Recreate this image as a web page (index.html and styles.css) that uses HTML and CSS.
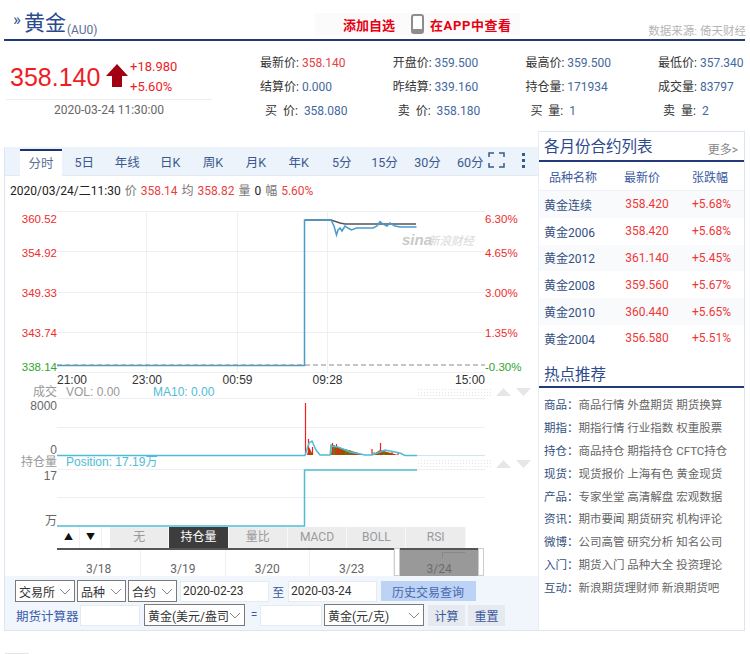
FILE: index.html
```html
<!DOCTYPE html>
<html lang="zh-CN">
<head>
    <meta charset="UTF-8">
    <meta name="viewport" content="width=device-width, initial-scale=1.0">
    <title>黄金(AU0)行情</title>
    <link rel="stylesheet" href="styles.css">
</head>
<body>
<div class="page">
    <header class="head">
        <div class="head-title"><span class="head-mark">»</span><h1>黄金</h1><sub>(AU0)</sub></div>
        <div class="head-actions">
            <a class="act add">添加自选</a>
            <svg class="phone" width="13" height="20" viewBox="0 0 13 20"><rect x="1" y="1" width="11" height="18" rx="2" fill="#fff" stroke="#8d8d8d" stroke-width="2"/><rect x="1" y="15" width="11" height="4" rx="1" fill="#8d8d8d"/></svg>
            <a class="act app">在APP中查看</a>
        </div>
        <div class="head-source">数据来源: 倚天财经</div>
    </header>

    <section class="quote">
        <div class="quote-main">
            <div class="quote-now">
                <span class="price">358.140</span>
                <svg class="up" width="22" height="23" viewBox="0 0 22 23"><path d="M11 0 22 12H16V23H6V12H0Z" fill="#a00012"/></svg>
                <div class="change"><span>+18.980</span><span>+5.60%</span></div>
            </div>
            <div class="quote-time">2020-03-24 11:30:00</div>
        </div>
        <div class="quote-grid">
            <div>最新价: <b class="red">358.140</b></div>
            <div>开盘价: <b>359.500</b></div>
            <div>最高价: <b>359.500</b></div>
            <div>最低价: <b>357.340</b></div>
            <div>结算价: <b>0.000</b></div>
            <div>昨结算: <b>339.160</b></div>
            <div>持仓量: <b>171934</b></div>
            <div>成交量: <b>83797</b></div>
            <div class="wide">买 价: <b>358.080</b></div>
            <div class="wide">卖 价: <b>358.180</b></div>
            <div class="wide">买 量: <b>1</b></div>
            <div class="wide">卖 量: <b>2</b></div>
        </div>
    </section>

    <main class="main">
        <section class="chart-panel">
            <nav class="tabs">
                <a class="tab on">分时</a>
                <a class="tab">5日</a>
                <a class="tab">年线</a>
                <a class="tab">日K</a>
                <a class="tab">周K</a>
                <a class="tab">月K</a>
                <a class="tab">年K</a>
                <a class="tab">5分</a>
                <a class="tab">15分</a>
                <a class="tab">30分</a>
                <a class="tab">60分</a>
                <svg class="full" width="17" height="16" viewBox="0 0 17 16"><path d="M1 5V1H6M11 1H16V5M16 11V15H11M6 15H1V11" fill="none" stroke="#3a5a8f" stroke-width="1.500"/></svg>
                <div class="dots"><i></i><i></i><i></i></div>
            </nav>
            <div class="info">2020/03/24/二11:30 <em>价</em> <span class="red">358.14</span> <em>均</em> <span class="red">358.82</span> <em>量</em> 0 <em>幅</em> <span class="red">5.60%</span></div>

            <svg class="chart" width="533" height="325" viewBox="5 202 533 325">
                <!-- 网格 -->
                <path class="grid" d="M57 211.5H485M57 251.5H485M57 292.5H485M57 332.5H485M57 372.5H485M146.5 211V372M237.5 211V372M327.5 211V372M57 398.5H485M57 427.5H485M57 469.5H485M57 497.5H485"/>

                <!-- 价格 -->
                <text class="num red-t" x="57" y="223" text-anchor="end">360.52</text>
                <text class="num red-t" x="57" y="257" text-anchor="end">354.92</text>
                <text class="num red-t" x="57" y="297" text-anchor="end">349.33</text>
                <text class="num red-t" x="57" y="337" text-anchor="end">343.74</text>
                <text class="num green-t" x="57" y="371" text-anchor="end">338.14</text>
                <text class="num red-t" x="485" y="223">6.30%</text>
                <text class="num red-t" x="485" y="257">4.65%</text>
                <text class="num red-t" x="485" y="297">3.00%</text>
                <text class="num red-t" x="485" y="337">1.35%</text>
                <text class="num green-t" x="485" y="371">-0.30%</text>

                <text class="mark" x="402" y="245">sina</text>
                <text class="mark-cn" x="428" y="245">新浪财经</text>
                <path class="avg" d="M305 220H331L340 223L345 224H416"/>
                <path class="line" d="M57 365.5H304.5V220H331L334 226L336.500 235L338 230L340 228L342 231L345 226L348 228L351.500 230L356.500 228H373L377 226L380 221.500L383 224L385 225L387 226L390 223L395 226L400 227H416.500"/>
                <path class="base" d="M57 365H485"/>

                <text class="time" x="57" y="384">21:00</text>
                <text class="time" x="147" y="384" text-anchor="middle">23:00</text>
                <text class="time" x="237.500" y="384" text-anchor="middle">00:59</text>
                <text class="time" x="327.500" y="384" text-anchor="middle">09:28</text>
                <text class="time" x="485" y="384" text-anchor="end">15:00</text>

                <!-- 成交 -->
                <text class="sub" x="57" y="396" text-anchor="end">成交</text>
                <text class="sub" x="66" y="396">VOL: 0.00</text>
                <text class="sub cyan-t" x="153" y="396">MA10: 0.00</text>
                <path class="dotted" d="M418 389.500H492M418 392.500H492M418 395.500H492"/>
                <path class="arrow-t" d="M503.500 388L511 396H496ZM516 388H531L523.500 396Z"/>
                <text class="axis" x="57" y="410" text-anchor="end">8000</text>
                <text class="axis" x="57" y="454" text-anchor="end">0</text>

                <polygon points="331,455 333,445 338,447 362,454 364,455" fill="#a84a00"/>
                <polygon points="307,455 309,447 313,455" fill="#a84a00"/>
                <polygon points="372,455 380,450 398,455" fill="#a84a00"/>
                <path class="bars-g" d="M331 455V444M334 455V445M346 455V449M350 455V450M374 455V452M380 455V451M384 455V450"/>
                <path class="bars-r" d="M305.500 455V403M308.500 455V439M312.500 455V447M332.500 455V443M336.500 455V444M372 455V449M380.500 455V443M392 455V451M398 455V452"/>
                <path class="ma" d="M57 455.500H305L309 443L312 441L316 450L320 455H330L331 446L338 447L350 452L365 455H372L385 450L400 453L405 455.500H417"/>
                <path class="ma-thin" d="M417 455.500H485"/>

                <!-- 持仓量 -->
                <text class="sub" x="57" y="466" text-anchor="end">持仓量</text>
                <text class="sub cyan-t" x="66" y="466">Position: 17.19万</text>
                <path class="dotted" d="M418 460.500H492M418 463.500H492M418 466.500H492"/>
                <path class="arrow-t" d="M503.500 460L511 468H496ZM516 460H531L523.500 468Z"/>
                <text class="axis" x="57" y="480" text-anchor="end">17</text>
                <text class="axis" x="57" y="525" text-anchor="end">万</text>
                <path class="ma" d="M57 526H304.500V470H417"/>
            </svg>

            <div class="ind-bar">
                <a class="ind-arrow">▲</a>
                <a class="ind-arrow">▼</a>
                <a class="ind first">无</a>
                <a class="ind on">持仓量</a>
                <a class="ind">量比</a>
                <a class="ind">MACD</a>
                <a class="ind">BOLL</a>
                <a class="ind">RSI</a>
            </div>

            <div class="range">
                <div class="range-day">3/18</div>
                <div class="range-day">3/19</div>
                <div class="range-day">3/20</div>
                <div class="range-day">3/23</div>
                <div class="range-day last">3/24</div>
                <div class="range-mask"><i></i></div>
                <div class="range-handle left"></div>
                <div class="range-handle right"></div>
            </div>

            <div class="forms">
                <div class="form-row">
                    <div class="sel w60">交易所<svg width="12" height="7" viewBox="0 0 12 7"><path d="M1 1 6 6 11 1"/></svg></div>
                    <div class="sel w49">品种<svg width="12" height="7" viewBox="0 0 12 7"><path d="M1 1 6 6 11 1"/></svg></div>
                    <div class="sel w49 m3">合约<svg width="12" height="7" viewBox="0 0 12 7"><path d="M1 1 6 6 11 1"/></svg></div>
                    <input class="txt date" type="text" value="2020-02-23">
                    <span class="to">至</span>
                    <input class="txt date" type="text" value="2020-03-24">
                    <button class="btn-query">历史交易查询</button>
                </div>
                <div class="form-row row2">
                    <a class="calc">期货计算器</a>
                    <input class="txt w60" type="text">
                    <div class="sel w101 m3">黄金(美元/盎司<svg width="12" height="7" viewBox="0 0 12 7"><path d="M1 1 6 6 11 1"/></svg></div>
                    <span class="eq">=</span>
                    <input class="txt w62" type="text">
                    <div class="sel w100 m3">黄金(元/克)<svg width="12" height="7" viewBox="0 0 12 7"><path d="M1 1 6 6 11 1"/></svg></div>
                    <button class="btn-small first">计算</button>
                    <button class="btn-small">重置</button>
                </div>
            </div>
        </section>

        <aside class="side">
            <div class="side-title"><h2>各月份合约列表</h2><a class="more">更多&gt;</a></div>
            <div class="list-head"><span>品种名称</span><span>最新价</span><span>张跌幅</span></div>
            <div class="list-row"><span>黄金连续</span><b>358.420</b><b>+5.68%</b></div>
            <div class="list-row"><span>黄金2006</span><b>358.420</b><b>+5.68%</b></div>
            <div class="list-row"><span>黄金2012</span><b>361.140</b><b>+5.45%</b></div>
            <div class="list-row"><span>黄金2008</span><b>359.560</b><b>+5.67%</b></div>
            <div class="list-row"><span>黄金2010</span><b>360.440</b><b>+5.65%</b></div>
            <div class="list-row"><span>黄金2004</span><b>356.580</b><b>+5.51%</b></div>

            <div class="side-title hot"><h2>热点推荐</h2></div>
            <ul class="hot-list">
                <li><span>商品：</span>商品行情 外盘期货 期货换算</li>
                <li><span>期指：</span>期指行情 行业指数 权重股票</li>
                <li><span>持仓：</span>商品持仓 期指持仓 CFTC持仓</li>
                <li><span>现货：</span>现货报价 上海有色 黄金现货</li>
                <li><span>产品：</span>专家坐堂 高清解盘 宏观数据</li>
                <li><span>资讯：</span>期市要闻 期货研究 机构评论</li>
                <li><span>微博：</span>公司高管 研究分析 知名公司</li>
                <li><span>入门：</span>期货入门 品种大全 投资理论</li>
                <li><span>互动：</span>新浪期货理财师 新浪期货吧</li>
            </ul>
        </aside>
    </main>
    <div class="foot-mark"></div>
</div>
</body>
</html>
```

FILE: styles.css
```css
body {
    margin: 0;
    background-color: #fff;
    font-family: Roboto, "Noto Sans CJK SC", sans-serif;
    font-size: 12px;
    color: #333;
}

.page {
    width: 741px;
    margin-left: 4px;
}

/* 顶部 */
.head {
    display: flex;
    align-items: flex-end;
    height: 39px;
    border-bottom: 2px solid #223a7c;
    position: relative;
}

.head-title {
    display: flex;
    align-items: flex-end;
    width: 311px;
    padding-left: 9px;
    box-sizing: border-box;
    color: #2d4a8e;
}

.head-mark {
    font-size: 17px;
    line-height: 40px;
    margin-right: 3px;
}

h1 {
    margin: 0;
    font-size: 21px;
    font-weight: normal;
    line-height: 36px;
    font-family: "Noto Sans CJK SC", sans-serif;
}

sub {
    margin-left: 1px;
    font-size: 12px;
    line-height: 18px;
    color: #5a6f95;
    vertical-align: baseline;
}

.head-actions {
    display: flex;
    align-items: center;
    width: 205px;
    height: 22px;
    margin-bottom: 4px;
    padding-left: 28px;
    box-sizing: border-box;
    background-color: #fbfbfb;
}

.act {
    color: #e60012;
    font-size: 13px;
    font-weight: bold;
    white-space: nowrap;
}

.act.app {
    letter-spacing: 0.600px;
}

.phone {
    margin: 0 6px 0 16px;
}

.head-source {
    margin-left: auto;
    margin-right: -1px;
    padding-bottom: 1px;
    font-size: 11.500px;
    color: #b5b5b5;
    white-space: nowrap;
}

/* 报价 */
.quote {
    display: flex;
    height: 90px;
}

.quote-main {
    flex-shrink: 0;
    width: 206px;
    margin-left: 2px;
    margin-right: 48px;
}

.quote-now {
    display: flex;
    align-items: center;
    height: 58px;
    padding-left: 4px;
    border-bottom: 1px solid #eee;
}

.price {
    font-family: "Liberation Sans", sans-serif;
    font-size: 25px;
    color: #f01c24;
    margin-top: 14px;
    width: 96px;
}

.up {
    margin-top: 10px;
}

.change {
    display: flex;
    flex-direction: column;
    margin-left: 2px;
    margin-top: 14px;
    color: #f01c24;
    font-size: 13px;
    line-height: 20px;
}

.quote-time {
    text-align: center;
    line-height: 20px;
    color: #666;
    font-size: 12px;
}

.quote-grid {
    flex-shrink: 0;
    display: grid;
    grid-template-columns: 132.700px 132.700px 132.700px 90px;
    grid-auto-rows: 24px;
    padding-top: 10px;
    line-height: 24px;
    font-size: 12px;
    white-space: nowrap;
}

.quote-grid b {
    font-weight: normal;
    color: #44699e;
}

.quote-grid b.red {
    color: #e8413f;
}

.wide {
    padding-left: 5px;
    word-spacing: 3px;
}

.wide b {
    word-spacing: 0;
}

.red {
    color: #e8413f;
}

/* 主体 */
.main {
    display: flex;
    align-items: flex-end;
    height: 500px;
}

.chart-panel {
    width: 534px;
    height: 484px;
    box-sizing: border-box;
    border-left: 1px solid #dce6f2;
    border-bottom: 1px solid #dce6f2;
}

.tabs {
    display: flex;
    align-items: flex-end;
    height: 29px;
    padding-left: 15px;
    background-color: #edf3fb;
    border-bottom: 1px solid #e3eaf4;
    box-sizing: border-box;
}

.tab {
    width: 42.900px;
    height: 25px;
    line-height: 26px;
    text-align: center;
    color: #3a5a8f;
    font-size: 12.500px;
    flex-shrink: 0;
}

.tab.on {
    width: 42px;
    margin-right: 0.900px;
    height: 27px;
    margin-bottom: -1px;
    background-color: #fff;
    border-top: 2px solid #1c3378;
    box-sizing: border-box;
    line-height: 25px;
    color: #5a6f95;
}

.full {
    align-self: flex-start;
    margin: 5px 0 0 -4px;
    flex-shrink: 0;
}

.dots {
    align-self: flex-start;
    display: flex;
    flex-direction: column;
    gap: 3px;
    margin: 6px 0 0 17px;
}

.dots i {
    width: 3px;
    height: 3px;
    background-color: #3a5a8f;
}

.info {
    height: 26px;
    padding: 7px 0 0 5px;
    box-sizing: border-box;
    line-height: 16px;
    font-size: 12px;
    word-spacing: 1px;
    color: #222;
    white-space: nowrap;
}

.info em {
    font-style: normal;
    color: #777;
}

.chart {
    display: block;
}

.chart text {
    font-family: "Liberation Sans", "Noto Sans CJK SC", sans-serif;
}

.grid {
    fill: none;
    stroke: #eeeff2;
    stroke-width: 1;
}

.num {
    font-size: 11.500px;
}

.red-t {
    fill: #ee2c2c;
}

.green-t {
    fill: #2ea52e;
}

.base {
    fill: none;
    stroke: #8a8a8a;
    stroke-dasharray: 5 3;
}

.line {
    fill: none;
    stroke: #4a9bce;
    stroke-width: 1.500;
}

.avg {
    fill: none;
    stroke: #555;
    stroke-width: 1.500;
}

.time {
    font-size: 12px;
    fill: #333;
}

.sub {
    font-size: 12px;
    fill: #999;
}

.sub.cyan-t {
    fill: #4fbcd6;
}

.axis {
    font-size: 12px;
    fill: #666;
}

.dotted {
    fill: none;
    stroke: #e4e4e4;
    stroke-dasharray: 1 2;
}

.arrow-t {
    fill: #e6e6e6;
}

.bars-g {
    fill: none;
    stroke: #22a83a;
}

.bars-r {
    fill: none;
    stroke: #f02020;
    stroke-width: 1.200;
}

.ma {
    fill: none;
    stroke: #4fbcd6;
    stroke-width: 1.500;
}

.ma-thin {
    fill: none;
    stroke: #cfe6ee;
}

.mark {
    font-size: 15px;
    font-weight: bold;
    font-style: italic;
    fill: #c9c9c9;
}

.mark-cn {
    font-size: 11.500px;
    font-style: italic;
    fill: #d8d8d8;
}

/* 指标 */
.ind-bar {
    display: flex;
    height: 21px;
    margin-left: 53px;
}

.ind-arrow {
    width: 22px;
    line-height: 21px;
    text-align: center;
    font-size: 9px;
    color: #111;
    border-right: 1px solid #f0f0f0;
    box-sizing: border-box;
}

.ind {
    width: 59.300px;
    line-height: 21px;
    text-align: center;
    background-color: #ececec;
    border-right: 1px solid #f8f8f8;
    box-sizing: border-box;
    color: #9a9a9a;
}

.ind.first {
    margin-left: 8px;
}

.ind.on {
    background-color: #3d3d3d;
    color: #fff;
}

.range {
    display: flex;
    position: relative;
    height: 28px;
    margin-left: 52px;
    width: 427px;
    border-top: 2px solid #555;
    box-sizing: border-box;
}

.range-day {
    width: 84.300px;
    box-sizing: border-box;
    border-right: 1px solid #f0f0f0;
    padding-top: 11px;
    line-height: 16px;
    text-align: center;
    color: #666;
}

.range-day.last {
    flex: 1;
    border-right: none;
}

.range-mask {
    position: absolute;
    left: 343px;
    top: 0;
    width: 78px;
    height: 26px;
    background-color: rgba(110, 110, 110, 0.7);
}

.range-mask i {
    position: absolute;
    left: 42px;
    top: 2px;
    width: 22px;
    height: 5px;
    border-top: 1px solid #888;
    border-left: 1px solid #888;
}

.range-handle {
    position: absolute;
    top: -2px;
    width: 6px;
    height: 28px;
    background-color: #fff;
    border: 1px solid #ccc;
    box-sizing: border-box;
}

.range-handle.left {
    left: 337px;
}

.range-handle.right {
    left: 421px;
}

/* 表单 */
.forms {
    height: 54px;
    padding: 4px 0 0 10px;
    box-sizing: border-box;
    background-color: #f1f5fc;
}

.form-row {
    display: flex;
    align-items: center;
    height: 22px;
}

.row2 {
    margin-top: 2px;
}

.sel {
    display: flex;
    align-items: center;
    justify-content: space-between;
    height: 22px;
    padding: 0 3px;
    margin-right: 2px;
    box-sizing: border-box;
    border: 1px solid #7a7a7a;
    background-color: #fff;
    font-size: 12px;
    color: #333;
    white-space: nowrap;
    overflow: hidden;
}

.sel.m3 {
    margin-right: 3px;
}

.sel svg {
    flex-shrink: 0;
    fill: none;
    stroke: #888;
}

.w60 {
    width: 60px;
}

.w49 {
    width: 49px;
}

.w62 {
    width: 62px;
}

.w100 {
    width: 100px;
}

.w101 {
    width: 101px;
}

.txt {
    height: 21px;
    padding: 0 2px;
    box-sizing: border-box;
    border: 1px solid #e6ebf3;
    background-color: #fff;
    font-family: inherit;
    font-size: 12px;
    color: #333;
}

.date {
    width: 88.500px;
}

.to {
    width: 19.500px;
    text-align: center;
    color: #3a5a9f;
}

.btn-query {
    width: 95px;
    height: 20px;
    margin-left: 4px;
    padding: 0;
    border: none;
    background-color: #bcd3f5;
    font-family: inherit;
    font-size: 12px;
    color: #4a68ad;
}

.calc {
    width: 64px;
    margin-left: 1px;
    font-size: 12.500px;
    color: #3a5bab;
    white-space: nowrap;
}

.row2 .w60 {
    margin-right: 4px;
}

.eq {
    width: 12px;
    text-align: center;
    color: #3a5a9f;
}

.row2 .w62 {
    margin-right: 2px;
}

.btn-small {
    width: 37px;
    height: 21px;
    margin-right: 3px;
    padding: 0;
    border: none;
    background-color: #e6e9ed;
    font-family: inherit;
    font-size: 12px;
    color: #3a5a9f;
}

.btn-small.first {
    margin-left: 1px;
}

/* 右侧 */
.side {
    width: 207px;
    height: 500px;
    box-sizing: border-box;
    border: 1px solid #dce6f2;
    border-left-color: #e8eef6;
}

.side-title {
    display: flex;
    align-items: center;
    justify-content: space-between;
    height: 25px;
    padding: 0 6px 3px 5px;
    border-bottom: 2px solid #223a7c;
}

h2 {
    margin: 0;
    font-size: 15.500px;
    font-weight: normal;
    color: #2d4a8e;
    font-family: "Noto Sans CJK SC", sans-serif;
}

.more {
    margin-top: 7px;
    color: #888;
    font-size: 12px;
}

.list-head,
.list-row {
    display: grid;
    grid-template-columns: 68px 70px 1fr;
    align-items: center;
}

.list-head {
    height: 29px;
    color: #3a5a9f;
    text-align: center;
    border-bottom: 1px solid #eef2f8;
    box-sizing: border-box;
    grid-template-columns: 68px 70px 66px;
}

.list-row {
    height: 26.800px;
    padding-left: 5px;
    color: #34507f;
}

.list-row:nth-child(odd) {
    background-color: #f9fafc;
}

.list-row b {
    font-weight: normal;
    color: #ee3838;
    text-align: center;
}

.list-row b:last-child {
    text-align: left;
    padding-left: 10px;
}

.hot {
    height: 26px;
    padding: 2px 6px 0 5px;
    margin-top: 6.200px;
}

.hot-list {
    margin: 0;
    padding: 6px 0 0 5px;
    list-style: none;
}

.hot-list li {
    height: 22.900px;
    line-height: 22.900px;
    color: #666;
    white-space: nowrap;
    font-size: 11.500px;
}

.hot-list span {
    color: #34507f;
}

.foot-mark {
    width: 24px;
    height: 1px;
    margin: 22px 0 0 1px;
    background-color: #e6e6e6;
}
```
